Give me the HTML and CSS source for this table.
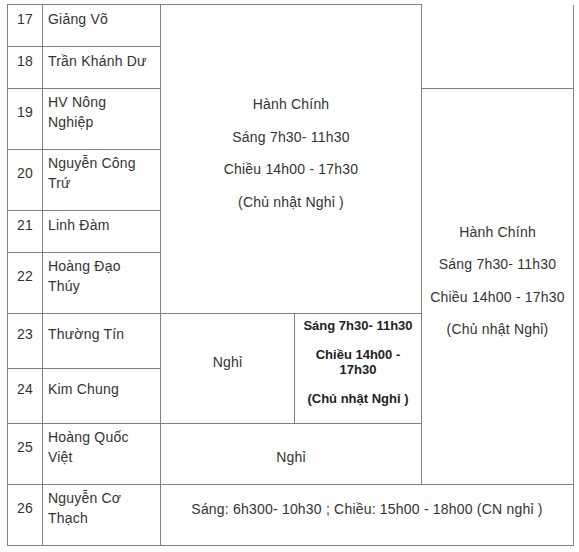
FILE: index.html
```html
<!DOCTYPE html>
<html lang="vi">
<head>
<meta charset="utf-8">
<title>Lịch làm việc</title>
<link rel="stylesheet" href="styles.css">
</head>
<body>
<div class="page">
<table class="schedule">
  <colgroup>
    <col class="c-num">
    <col class="c-name">
    <col class="c-mid1">
    <col class="c-mid2">
    <col class="c-right">
  </colgroup>
  <tbody>
    <tr class="h42">
      <td class="num"><p>17</p></td>
      <td class="name"><p>Giảng Võ</p></td>
      <td class="sched" colspan="2" rowspan="6">
        <p>Hành Chính</p>
        <p>Sáng 7h30- 11h30</p>
        <p>Chiều 14h00 - 17h30</p>
        <p>(Chủ nhật Nghỉ )</p>
      </td>
      <td class="cont" rowspan="2"></td>
    </tr>
    <tr class="h42">
      <td class="num"><p>18</p></td>
      <td class="name"><p>Trần Khánh Dư</p></td>
    </tr>
    <tr class="h61">
      <td class="num"><p>19</p></td>
      <td class="name"><p>HV Nông Nghiệp</p></td>
      <td class="sched" rowspan="7">
        <p>Hành Chính</p>
        <p>Sáng 7h30- 11h30</p>
        <p>Chiều 14h00 - 17h30</p>
        <p>(Chủ nhật Nghỉ)</p>
      </td>
    </tr>
    <tr class="h61">
      <td class="num"><p>20</p></td>
      <td class="name"><p>Nguyễn Công Trứ</p></td>
    </tr>
    <tr class="h42">
      <td class="num"><p>21</p></td>
      <td class="name"><p>Linh Đàm</p></td>
    </tr>
    <tr class="h61">
      <td class="num"><p>22</p></td>
      <td class="name"><p>Hoàng Đạo Thúy</p></td>
    </tr>
    <tr class="h55">
      <td class="num"><p>23</p></td>
      <td class="name"><p>Thường Tín</p></td>
      <td class="sched" rowspan="2"><p>Nghỉ</p></td>
      <td class="bold" rowspan="2">
        <p>Sáng 7h30- 11h30</p>
        <p>Chiều 14h00 - 17h30</p>
        <p>(Chủ nhật Nghỉ )</p>
      </td>
    </tr>
    <tr class="h55">
      <td class="num"><p>24</p></td>
      <td class="name"><p>Kim Chung</p></td>
    </tr>
    <tr class="h61">
      <td class="num"><p>25</p></td>
      <td class="name"><p>Hoàng Quốc Việt</p></td>
      <td class="off" colspan="2">Nghỉ</td>
    </tr>
    <tr class="h61">
      <td class="num"><p>26</p></td>
      <td class="name"><p>Nguyễn Cơ Thạch</p></td>
      <td class="sched" colspan="3"><p>Sáng: 6h300- 10h30 ; Chiều: 15h00 - 18h00 (CN nghỉ )</p></td>
    </tr>
  </tbody>
</table>
</div>
</body>
</html>
```

FILE: styles.css
```css
html, body {
  margin: 0;
  padding: 0;
  background: #ffffff;
}

.page {
  padding: 4px 0 0 7px;
  font-family: "Liberation Sans", Arial, sans-serif;
  font-size: 14px;
  line-height: 20px;
  letter-spacing: 0.2px;
  color: #333333;
}

.schedule {
  border-collapse: collapse;
  table-layout: fixed;
  width: 566px;
}

.c-num { width: 35px; }
.c-name { width: 118px; }
.c-mid1 { width: 134px; }
.c-mid2 { width: 127px; }
.c-right { width: 152px; }

.schedule td {
  border: 1px solid #808080;
  padding: 0 5px;
  vertical-align: middle;
}

.schedule p {
  margin: 0 0 14px;
}

.h42 { height: 42px; }
.h55 { height: 55px; }
.h61 { height: 61px; }

.schedule td.num {
  text-align: center;
  padding: 0 2px;
}

.schedule td.name {
  padding: 0 10px 0 5px;
}

.schedule td.sched {
  text-align: center;
}

.schedule td.sched p {
  margin: 0 0 12.5px;
}

.schedule td.cont {
  border-top: none;
}

.schedule td.bold {
  text-align: center;
  font-size: 13px;
  line-height: 15px;
  font-weight: bold;
  letter-spacing: 0;
  color: #222222;
  padding: 0 3px;
}

.schedule td.bold p {
  margin: 0 0 14px;
}

.schedule td.off {
  text-align: center;
  padding-top: 5px;
}
```
